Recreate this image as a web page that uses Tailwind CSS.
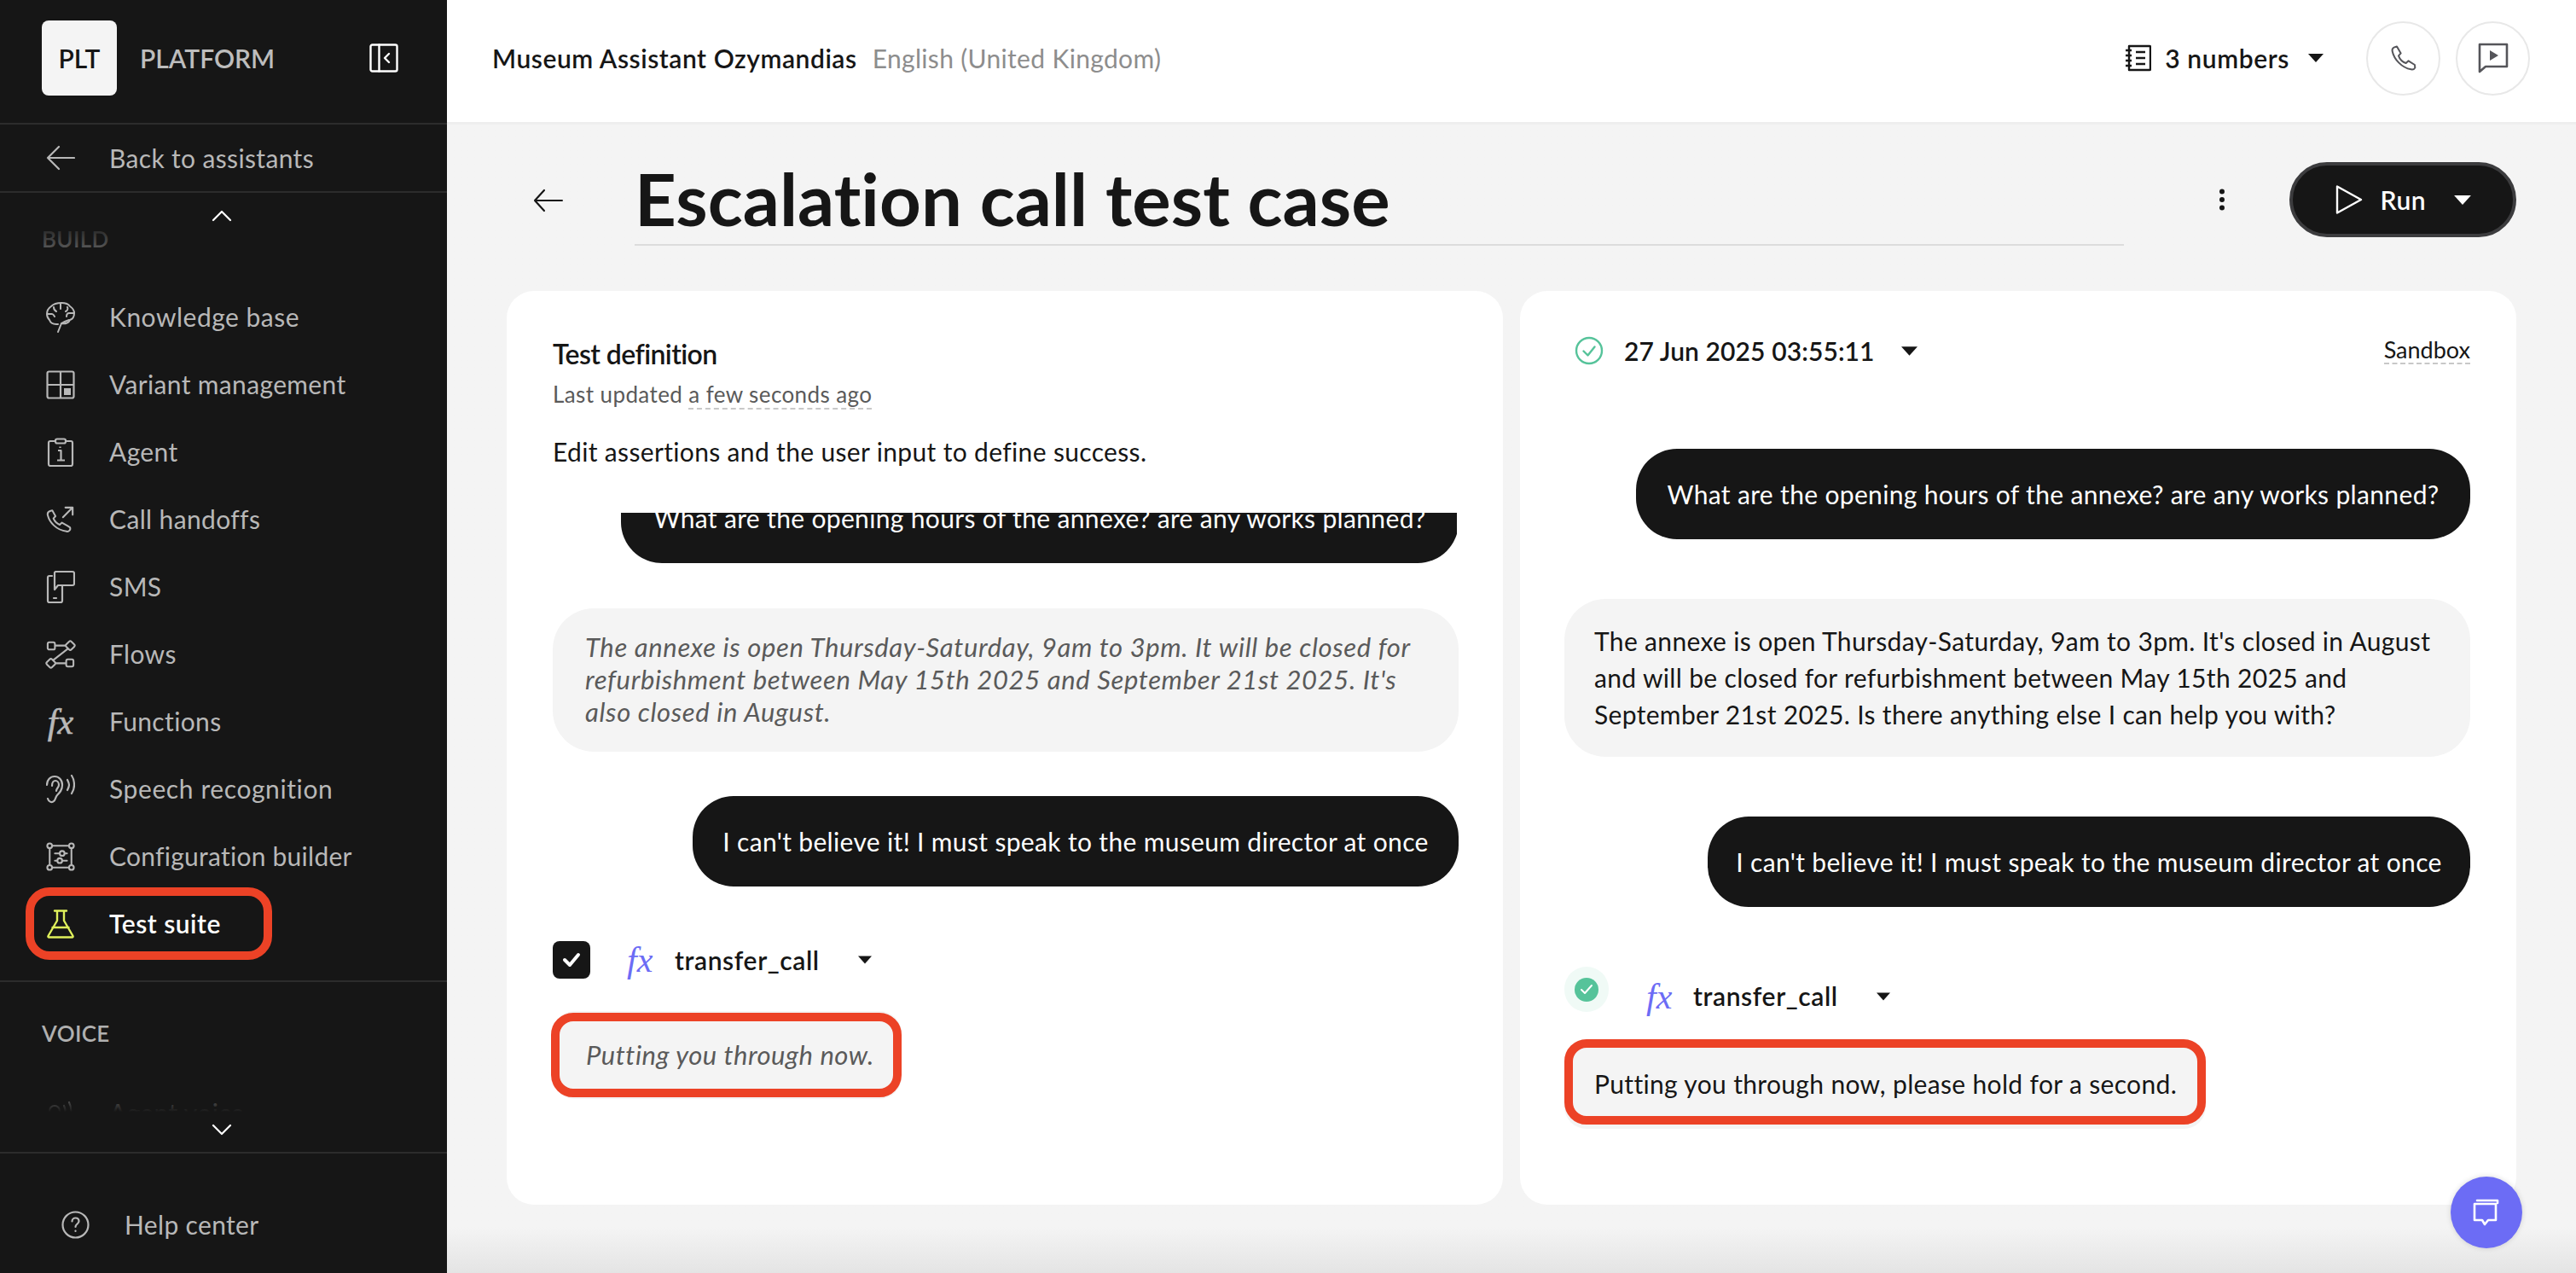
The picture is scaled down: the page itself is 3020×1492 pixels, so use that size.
<!doctype html>
<html lang="en">
<head>
<meta charset="utf-8">
<title>Escalation call test case</title>
<script src="https://cdn.jsdelivr.net/npm/@tailwindcss/browser@4"></script>
</head>
<body class="[font-family:Lato,sans-serif] w-[3020px] h-[1492px] overflow-hidden bg-[#f4f4f4] text-[#161616]">
<div class="flex h-[1492px]">
  <!-- Sidebar -->
  <aside class="w-[524px] shrink-0 bg-[#161616] flex flex-col text-[#b8b8b8] text-[30px] tracking-[0.35px]">
    <div class="h-[146px] shrink-0 border-b-2 border-[#2c2c2c] flex items-center pl-[49px] pb-[8px] tracking-normal">
      <div class="w-[88px] h-[88px] rounded-[8px] bg-[#f4f4f4] text-[#161616] flex items-center justify-center font-semibold text-[30px]">PLT</div>
      <span class="ml-[27px] w-[269px] font-semibold text-[#bdbdbd] text-[30px]">PLATFORM</span>
      <svg class="w-[34px] h-[34px]" viewBox="0 0 34 34" fill="none" stroke="#fff" stroke-width="2.4" stroke-linejoin="round" stroke-linecap="round"><rect x="1.5" y="1.5" width="31" height="31" rx="2"/><path d="M11.5 1.5v31M23 12l-5 5 5 5"/></svg>
    </div>
    <a class="h-[80px] shrink-0 border-b-2 border-[#2c2c2c] flex items-center pl-[54px] gap-[40px]">
      <svg class="w-[34px] h-[34px]" viewBox="0 0 34 34" fill="none" stroke="#b8b8b8" stroke-width="2.2" stroke-linecap="round" stroke-linejoin="round"><path d="M33 17H2M15 4 2 17l13 13"/></svg>
      <span>Back to assistants</span>
    </a>
    <div class="relative h-[1124px] shrink-0 overflow-hidden">
      <div class="absolute top-0 inset-x-0 h-[110px] bg-gradient-to-b from-[#161616] from-30% to-[#161616]/0 z-10"></div>
      <svg class="absolute top-[20px] left-[248px] w-[24px] h-[14px] z-20" viewBox="0 0 24 14" fill="none" stroke="#fff" stroke-width="2.2" stroke-linecap="round" stroke-linejoin="round"><path d="M2 12 12 2l10 10"/></svg>
      <div class="pt-[38px]">
        <div class="pl-[49px] h-[32px] flex items-center text-[26px] font-semibold text-[#b0b0b0]">BUILD</div>
        <nav class="mt-[36px] flex flex-col">
          <a class="h-[79px] flex items-center pl-[54px] gap-[40px]">
            <svg class="w-[34px] h-[36px]" viewBox="0 0 34 36" fill="none" stroke="#b8b8b8" stroke-width="2" stroke-linecap="round" stroke-linejoin="round"><path d="M14 35l4-10c5 1 9-1 10-4 3-1 5-4 5-8 0-3-2-6-5-8-2-3-6-4-10-4-5 0-9 1-12 4-3 2-5 5-5 9 0 3 1 5 3 7 1 3 4 5 8 5h2"/><path d="M17 2v6M9 6c0 2 1 4 3 5M25 6c1 2 0 4-2 5M2 14h5c1 0 2 1 3 3M33 13h-6c-2 0-3 2-3 4M18 25c3-2 6-3 9-4"/></svg>
            <span class="tracking-[0.5px]">Knowledge base</span>
          </a>
          <a class="h-[79px] flex items-center pl-[54px] gap-[40px]">
            <svg class="w-[34px] h-[34px]" viewBox="0 0 34 34" fill="none" stroke="#b8b8b8" stroke-width="2.2"><rect x="1.5" y="1.5" width="31" height="31" rx="2"/><path d="M17 1.5v31M1.5 17h31"/><rect x="21" y="21" width="8" height="8" fill="#b8b8b8" stroke="none"/></svg>
            <span>Variant management</span>
          </a>
          <a class="h-[79px] flex items-center pl-[54px] gap-[40px]">
            <svg class="w-[34px] h-[34px]" viewBox="0 0 34 34" fill="none" stroke="#b8b8b8" stroke-width="2.2" stroke-linejoin="round"><path d="M11 4H5a2 2 0 0 0-2 2v25a2 2 0 0 0 2 2h24a2 2 0 0 0 2-2V6a2 2 0 0 0-2-2h-6"/><rect x="11" y="1.5" width="12" height="5" rx="2"/><path d="M14 15h3.500v11M13 26.500h9M16.500 10.500v1.500"/></svg>
            <span>Agent</span>
          </a>
          <a class="h-[79px] flex items-center pl-[54px] gap-[40px]">
            <svg class="w-[34px] h-[34px]" viewBox="0 0 24 24" fill="none" stroke="#b8b8b8" stroke-width="1.500" stroke-linecap="round" stroke-linejoin="round"><path d="M21 18.500a2.500 2.500 0 0 1-3 3.500C9 21 3 14 1.500 8c-.5-2 .5-3.500 2.500-4l1.500-.3 2.800 5-1.800 2c1 2.500 3 4.500 5.500 5.500l2-1.800 5 2.800z" transform="translate(0 1) scale(.94)"/><path d="M14 10l8-8M16 2h6v6"/></svg>
            <span>Call handoffs</span>
          </a>
          <a class="h-[79px] flex items-center pl-[54px] gap-[40px]">
            <svg class="w-[34px] h-[40px]" viewBox="0 0 34 40" fill="none" stroke="#b8b8b8" stroke-width="2.2" stroke-linecap="round" stroke-linejoin="round"><path d="M7 7H4a2 2 0 0 0-2 2v27a2 2 0 0 0 2 2h13a2 2 0 0 0 2-2V19"/><path d="M11 2h20a2 2 0 0 1 2 2v12a2 2 0 0 1-2 2H14l-4 5V3z"/><path d="M9 33h3"/></svg>
            <span>SMS</span>
          </a>
          <a class="h-[79px] flex items-center pl-[54px] gap-[40px]">
            <svg class="w-[34px] h-[34px] overflow-visible" viewBox="0 0 36 36" fill="none" stroke="#b8b8b8" stroke-width="2.2" stroke-linejoin="round"><rect x="2" y="3" width="9" height="9" rx="2"/><rect x="25" y="24" width="9" height="9" rx="2"/><rect x="25.500" y="2.500" width="9" height="9" rx="2" transform="rotate(45 30 7)"/><rect x="1.500" y="24.500" width="9" height="9" rx="2" transform="rotate(45 6 29)"/><path d="M11 7h13M12 29h13M27 11 9 25"/></svg>
            <span>Flows</span>
          </a>
          <a class="h-[79px] flex items-center pl-[54px] gap-[40px]">
            <span class="w-[34px] text-center [font-family:'Liberation_Serif',serif] italic text-[42px] leading-none tracking-normal [-webkit-text-stroke:0.6px_#b8b8b8] text-[#b8b8b8]">fx</span>
            <span>Functions</span>
          </a>
          <a class="h-[79px] flex items-center pl-[54px] gap-[40px]">
            <svg class="w-[34px] h-[34px]" viewBox="0 0 34 34" fill="none" stroke="#b8b8b8" stroke-width="2.2" stroke-linecap="round" stroke-linejoin="round"><path d="M2 28c1 4 5 5 7 3 2-1 2-5 4-7 3-3 6-6 6-12 0-6-4-10-9-10S1 6 1 12"/><path d="M7 13c0-4 2-6 4-6s4 2 4 5c0 3-3 4-3 7"/><path d="M25 6c1 2 2 4 2 6s-1 4-2 6M30 1c2 3 3 7 3 11s-1 7-3 10"/></svg>
            <span class="tracking-[0.6px]">Speech recognition</span>
          </a>
          <a class="h-[79px] flex items-center pl-[54px] gap-[40px]">
            <svg class="w-[34px] h-[34px] overflow-visible" viewBox="0 0 36 36" fill="none" stroke="#b8b8b8" stroke-width="2.2" stroke-linecap="round"><circle cx="4.500" cy="4.500" r="3"/><circle cx="31.500" cy="4.500" r="3"/><circle cx="4.500" cy="31.500" r="3"/><circle cx="31.500" cy="31.500" r="3"/><path d="M8 4.500h20M8 31.500h20M4.500 8v20M31.500 8v20M11 14h6M23 14h3M11 23h3M20 23h6"/><circle cx="20" cy="14" r="3"/><circle cx="17" cy="23" r="3"/></svg>
            <span class="tracking-[0.25px]">Configuration builder</span>
          </a>
          <a class="relative h-[79px] flex items-center pl-[54px] gap-[40px] text-white font-semibold tracking-[0.5px]">
            <span class="absolute left-[30px] top-[-3px] w-[289px] h-[85px] rounded-[28px] border-[10px] border-[#ec4226]"></span>
            <svg class="w-[34px] h-[34px]" viewBox="0 0 34 34" fill="none" stroke="#dff05b" stroke-width="2.400" stroke-linecap="round" stroke-linejoin="round"><path d="M10 1.500h14M13 1.500V13L2.500 31a1 1 0 0 0 1 1.500h27a1 1 0 0 0 1-1.500L21 13V1.500M7.500 21h19"/></svg>
            <span>Test suite</span>
          </a>
        </nav>
        <div class="mt-[27px] border-t-2 border-[#2c2c2c] pt-[44px]">
          <div class="pl-[49px] h-[32px] flex items-center text-[26px] font-semibold text-[#b0b0b0]">VOICE</div>
          <a class="mt-[38px] h-[79px] flex items-center pl-[54px] gap-[40px]">
            <svg class="w-[34px] h-[34px]" viewBox="0 0 34 34" fill="none" stroke="#b8b8b8" stroke-width="2.200" stroke-linecap="round"><circle cx="10" cy="14" r="6"/><path d="M21 8c2 4 2 8 0 12M27 4c3 6 3 14 0 20"/></svg>
            <span>Agent voice</span>
          </a>
        </div>
      </div>
      <div class="absolute bottom-0 inset-x-0 h-[85px] bg-gradient-to-t from-[#161616] from-55% to-[#161616]/0 z-10"></div>
      <svg class="absolute bottom-[19px] left-[248px] w-[24px] h-[14px] z-20" viewBox="0 0 24 14" fill="none" stroke="#fff" stroke-width="2.2" stroke-linecap="round" stroke-linejoin="round"><path d="M2 2l10 10L22 2"/></svg>
    </div>
    <a class="flex-1 border-t-2 border-[#2c2c2c] flex items-center pl-[72px] gap-[41px] pt-[27px]">
      <svg class="w-[33px] h-[33px]" viewBox="0 0 33 33" fill="none" stroke="#b8b8b8" stroke-width="2.200" stroke-linecap="round"><circle cx="16.500" cy="16.500" r="15"/><path d="M12.500 12.500c0-2.500 2-4 4-4 2.500 0 4 1.700 4 3.700 0 3.300-4 3.300-4 6.800"/><path d="M16.500 23.500v.5"/></svg>
      <span>Help center</span>
    </a>
  </aside>

  <!-- Main -->
  <main class="relative flex-1 flex flex-col min-w-0">
    <header class="h-[146px] shrink-0 bg-white border-b-[3px] border-[#eeeeee] flex items-center pl-[53px] pr-[54px] pb-[7px] text-[30px]">
      <span class="font-semibold tracking-[0.55px]">Museum Assistant Ozymandias</span>
      <span class="ml-[18px] text-[#8d8d8d] tracking-[0.33px]">English (United Kingdom)</span>
      <div class="ml-auto flex items-center">
        <svg class="w-[30px] h-[32px]" viewBox="0 0 30 32" fill="none" stroke="#161616" stroke-width="2.400" stroke-linejoin="round"><path d="M4 2h24a1 1 0 0 1 1 1v26a1 1 0 0 1-1 1H4z"/><path d="M0 7h7M0 13h7M0 19h7M0 25h7M12 9h11M12 16h11M12 23h11"/></svg>
        <span class="ml-[16px] font-semibold tracking-[0.6px]">3 numbers</span>
        <svg class="ml-[22px] w-[18px] h-[10px]" viewBox="0 0 18 10"><path d="M0 0h18L9 10z" fill="#161616"/></svg>
        <div class="ml-[50px] w-[87px] h-[87px] rounded-full border-2 border-[#e8e8e8] flex items-center justify-center">
          <svg class="w-[32px] h-[32px]" viewBox="0 0 24 24" fill="none" stroke="#55555a" stroke-width="1.500" stroke-linecap="round" stroke-linejoin="round"><path d="M22 20.500c-.5 1-2 1.800-3.500 1.500C10 20.500 3.500 13 2 6c-.3-1.500.5-3 1.800-3.500L6 1.800l3.500 6-2 2.200c1 3 3.500 5.500 6.500 6.500l2.200-2 5.500 3.500z"/></svg>
        </div>
        <div class="ml-[18px] w-[87px] h-[87px] rounded-full border-2 border-[#e8e8e8] flex items-center justify-center">
          <svg class="w-[36px] h-[36px]" viewBox="0 0 36 36" fill="none" stroke="#55555a" stroke-width="2.600" stroke-linejoin="round"><path d="M2 2h32v26H9l-7 6z"/><path d="M14 9l10 6-10 6z" fill="#55555a" stroke="none"/></svg>
        </div>
      </div>
    </header>

    <div class="flex-1 flex flex-col pl-[70px] pr-[70px] bg-gradient-to-b from-[#f4f4f4] from-96% to-[#e4e4e4]">
      <div class="h-[195px] shrink-0 flex items-start">
        <svg class="mt-[75px] ml-[31px] w-[36px] h-[28px]" viewBox="0 0 36 28" fill="none" stroke="#161616" stroke-width="2.200" stroke-linecap="round" stroke-linejoin="round"><path d="M34 14H2M13 2 2 14l11 12"/></svg>
        <div class="ml-[83px] w-[1750px] h-[142px] border-b-2 border-[#dcdcdc] flex items-end pt-[2px] text-[85px] leading-[108px] font-bold tracking-[0.06px]">Escalation call test case</div>
        <svg class="ml-[111px] mt-[75px] w-[8px] h-[26px]" viewBox="0 0 8 26" fill="#161616"><circle cx="4" cy="3.500" r="3"/><circle cx="4" cy="13" r="3"/><circle cx="4" cy="22.500" r="3"/></svg>
        <button class="ml-[75px] mt-[44px] w-[266px] h-[88px] rounded-full bg-[#161616] border-[4px] border-[#3c3c3e] text-white font-semibold text-[30px] flex items-center pl-[50px]">
          <svg class="w-[32px] h-[36px]" viewBox="0 0 32 36" fill="none" stroke="#fff" stroke-width="2.400" stroke-linejoin="round"><path d="M2 2.500v31L30 18z"/></svg>
          <span class="ml-[20px] tracking-[0.6px]">Run</span>
          <svg class="ml-[33px] w-[20px] h-[11px]" viewBox="0 0 18 10"><path d="M0 0h18L9 10z" fill="#fff"/></svg>
        </button>
      </div>

      <div class="grid grid-cols-2 gap-[20px] h-[1071px] shrink-0 text-[30px] leading-[39px] tracking-[0.34px]">
        <!-- Left card -->
        <section class="bg-white rounded-[32px] px-[54px] flex flex-col min-w-0">
          <h2 class="mt-[56px] text-[32px] leading-[36px] font-semibold tracking-[-0.6px]">Test definition</h2>
          <p class="mt-[14px] text-[26px] leading-[30px] tracking-[0.4px] text-[#5a5a5a]">Last updated <span class="border-b-2 border-dashed border-[#c8c8c8]">a few seconds ago</span></p>
          <p class="mt-[33px] h-[33px]">Edit assertions and the user input to define success.</p>
          <div class="mt-[58px] h-[59px] shrink-0 overflow-hidden flex justify-end">
            <div class="h-[106px] -mt-[47px] w-[982px] mr-[-2px] rounded-[48px] bg-[#161616] text-white flex items-center justify-center whitespace-nowrap">What are the opening hours of the annexe? are any works planned?</div>
          </div>
          <div class="mt-[53px] w-[1062px] h-[168px] rounded-[48px] bg-[#f4f4f4] pl-[38px] pr-[40px] py-[26px] italic text-[31px] tracking-[0.64px] text-[#5a5a5a] leading-[38px]">The annexe is open Thursday-Saturday, 9am to 3pm. It will be closed for refurbishment between May 15th 2025 and September 21st 2025. It's also closed in August.</div>
          <div class="mt-[52px] self-end -mr-[2px] w-[898px] h-[106px] rounded-[48px] bg-[#161616] text-white flex items-center justify-center whitespace-nowrap">I can't believe it! I must speak to the museum director at once</div>
          <div class="mt-[64px] flex items-center h-[44px]">
            <span class="w-[44px] h-[44px] rounded-[8px] bg-[#161616] flex items-center justify-center">
              <svg class="w-[22px] h-[18px]" viewBox="0 0 22 18" fill="none" stroke="#fff" stroke-width="4" stroke-linecap="round" stroke-linejoin="round"><path d="M3 9l6 6L19 3"/></svg>
            </span>
            <span class="ml-[43px] w-[33px] [font-family:'Liberation_Serif',serif] italic text-[42px] leading-none tracking-normal text-[#6c6cf5]">fx</span>
            <span class="ml-[23px] font-semibold tracking-[0.6px]">transfer_call</span>
            <svg class="ml-[45px] w-[16px] h-[10px]" viewBox="0 0 18 10"><path d="M0 0h18L9 10z" fill="#161616"/></svg>
          </div>
          <div class="relative mt-[38px] w-[409px] h-[103px] rounded-[26px] bg-[#f4f4f4] flex items-center pl-[39px] italic text-[31px] tracking-[0.55px] text-[#5a5a5a]">
            <span class="absolute -left-[2px] top-[2px] w-[411px] h-[99px] rounded-[26px] border-[10px] border-[#ec4226]"></span>
            Putting you through now.
          </div>
        </section>

        <!-- Right card -->
        <section class="bg-white rounded-[32px] px-[52px] pr-[54px] flex flex-col min-w-0">
          <div class="mt-[52px] flex items-center h-[36px]">
            <svg class="ml-[12px] w-[34px] h-[34px]" viewBox="0 0 34 34" fill="none" stroke="#56c39a" stroke-width="2.400" stroke-linecap="round" stroke-linejoin="round"><circle cx="17" cy="17" r="15"/><path d="M10.500 17.500l5 5 8-10"/></svg>
            <span class="ml-[24px] font-semibold tracking-[0.1px]">27 Jun 2025 03:55:11</span>
            <svg class="ml-[31px] w-[19px] h-[11px]" viewBox="0 0 18 10"><path d="M0 0h18L9 10z" fill="#161616"/></svg>
            <span class="ml-auto text-[27px] leading-[30px] tracking-normal border-b-2 border-dashed border-[#c8c8c8]">Sandbox</span>
          </div>
          <div class="mt-[97px] self-end w-[978px] h-[106px] rounded-[48px] bg-[#161616] text-white flex items-center justify-center whitespace-nowrap">What are the opening hours of the annexe? are any works planned?</div>
          <div class="mt-[70px] w-[1062px] h-[185px] rounded-[48px] bg-[#f4f4f4] pl-[35px] pr-[36px] py-[28px] leading-[43px]">The annexe is open Thursday-Saturday, 9am to 3pm. It's closed in August and will be closed for refurbishment between May 15th 2025 and September 21st 2025. Is there anything else I can help you with?</div>
          <div class="mt-[70px] self-end w-[894px] h-[106px] rounded-[48px] bg-[#161616] text-white flex items-center justify-center whitespace-nowrap">I can't believe it! I must speak to the museum director at once</div>
          <div class="mt-[70px] flex items-center h-[53px]">
            <span class="w-[52px] h-[53px] rounded-full bg-[#f0faf6] flex items-center justify-center">
              <span class="w-[28px] h-[28px] rounded-full bg-[#56c39a] flex items-center justify-center">
                <svg class="w-[16px] h-[14px]" viewBox="0 0 16 14" fill="none" stroke="#fff" stroke-width="2" stroke-linecap="round" stroke-linejoin="round"><path d="M2 7l4 4 8-9"/></svg>
              </span>
            </span>
            <span class="ml-[44px] w-[33px] [font-family:'Liberation_Serif',serif] italic text-[42px] leading-none tracking-normal text-[#6c6cf5] translate-y-[8px]">fx</span>
            <span class="ml-[22px] font-semibold tracking-[0.6px] translate-y-[8px]">transfer_call</span>
            <svg class="ml-[45px] w-[16px] h-[10px] translate-y-[8px]" viewBox="0 0 18 10"><path d="M0 0h18L9 10z" fill="#161616"/></svg>
          </div>
          <div class="relative mt-[32px] w-[752px] h-[105px] rounded-[26px] bg-[#f4f4f4] flex items-center pl-[35px]">
            <span class="absolute left-0 top-0 w-[752px] h-[100px] rounded-[26px] border-[10px] border-[#ec4226]"></span>
            Putting you through now, please hold for a second.
          </div>
        </section>
      </div>
    </div>

    <button class="absolute right-[63px] bottom-[29px] w-[84px] h-[84px] rounded-full bg-[#6c6cf5] flex items-center justify-center shadow-[0_0_6px_rgba(0,0,0,0.15)]">
      <svg class="w-[32px] h-[32px]" viewBox="0 0 32 32" fill="none" stroke="#fff" stroke-width="2.600" stroke-linejoin="round" stroke-linecap="round"><path d="M5 2h24v3M2 6h25v19h-9l-4 5-3-5H2z"/></svg>
    </button>
  </main>
</div>
</body>
</html>
